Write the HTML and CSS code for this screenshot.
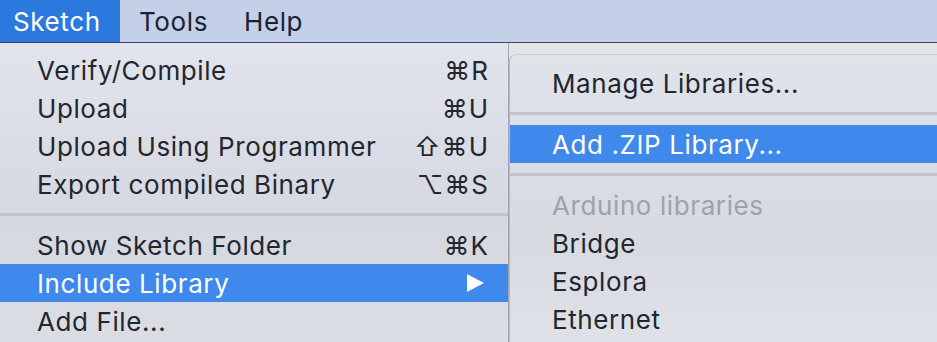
FILE: index.html
```html
<!DOCTYPE html>
<html lang="en">
<head>
  <meta charset="UTF-8">
  <title>Sketch menu</title>
  <link rel="stylesheet" href="styles.css">
</head>
<body>
  <div class="menubar">
    <span class="bar-item active">Sketch</span>
    <span class="bar-item">Tools</span>
    <span class="bar-item">Help</span>
  </div>
  <div class="stage">
    <div class="menu">
      <div class="row"><span>Verify/Compile</span><span class="keys">⌘R</span></div>
      <div class="row"><span>Upload</span><span class="keys">⌘U</span></div>
      <div class="row"><span>Upload Using Programmer</span><span class="keys">⇧⌘U</span></div>
      <div class="row"><span>Export compiled Binary</span><span class="keys">⌥⌘S</span></div>
      <div class="sep"></div>
      <div class="row"><span>Show Sketch Folder</span><span class="keys">⌘K</span></div>
      <div class="row selected"><span>Include Library</span><span class="arrow"></span></div>
      <div class="row"><span>Add File...</span></div>
    </div>
    <div class="submenu">
      <div class="row"><span>Manage Libraries...</span></div>
      <div class="sep"></div>
      <div class="row selected"><span>Add .ZIP Library...</span></div>
      <div class="sep"></div>
      <div class="row disabled"><span>Arduino libraries</span></div>
      <div class="row"><span>Bridge</span></div>
      <div class="row"><span>Esplora</span></div>
      <div class="row"><span>Ethernet</span></div>
    </div>
  </div>
</body>
</html>
```

FILE: styles.css
```css
body {
  margin: 0;
  width: 937px;
  height: 342px;
  overflow: hidden;
  font-family: Inter, "Noto Sans", "DejaVu Sans", sans-serif;
  font-size: 26px;
  letter-spacing: 0.6px;
  color: #23262c;
  background-color: #e3e5eb;
}
.menubar {
  height: 43px;
  box-sizing: border-box;
  display: flex;
  align-items: stretch;
  background-color: #c4d0e7;
  border-bottom: 1px solid #3b4660;
}
.bar-item {
  display: flex;
  align-items: center;
  padding: 0 18px;
  color: #1b2133;
}
.bar-item.active {
  background-color: #2b78df;
  color: #fff;
  width: 120px;
  box-sizing: border-box;
  padding: 0 0 0 13px;
  margin-right: 1px;
}
.stage {
  display: flex;
  align-items: flex-start;
}
.menu {
  width: 509px;
  height: 299px;
  padding-top: 8px;
  box-sizing: border-box;
  border-right: 1px solid #a3a6ad;
  background: linear-gradient(180deg, #e1e4ec 0%, #d5d8e0 60%, #dadde4 100%);
}
.row {
  height: 38px;
  display: flex;
  align-items: center;
  justify-content: space-between;
  padding: 0 19px 0 37px;
  white-space: nowrap;
}
.keys {
  font-family: Inter, "DejaVu Sans", sans-serif;
  letter-spacing: 1px;
}
.selected {
  background-color: #3f88ec;
  color: #fff;
}
.disabled {
  color: #9ea2aa;
}
.sep {
  height: 23px;
  display: flex;
  align-items: center;
}
.sep::before {
  content: "";
  flex: 1;
  height: 3px;
  background-color: #c1c4cc;
}
.arrow {
  width: 0;
  height: 0;
  margin-right: 5px;
  border-top: 9px solid transparent;
  border-bottom: 9px solid transparent;
  border-left: 17px solid #fff;
}
.submenu {
  flex: 1;
  margin-top: 11px;
  height: 300px;
  padding-top: 9px;
  box-sizing: border-box;
  border-top-left-radius: 7px;
  border-left: 1px solid #b4b7be;
  border-top: 1px solid #c9ccd3;
  background: linear-gradient(180deg, #e0e3ea 0%, #d7dae1 60%, #dfe2e8 100%);
}
.submenu .row {
  padding-left: 42px;
}
```
